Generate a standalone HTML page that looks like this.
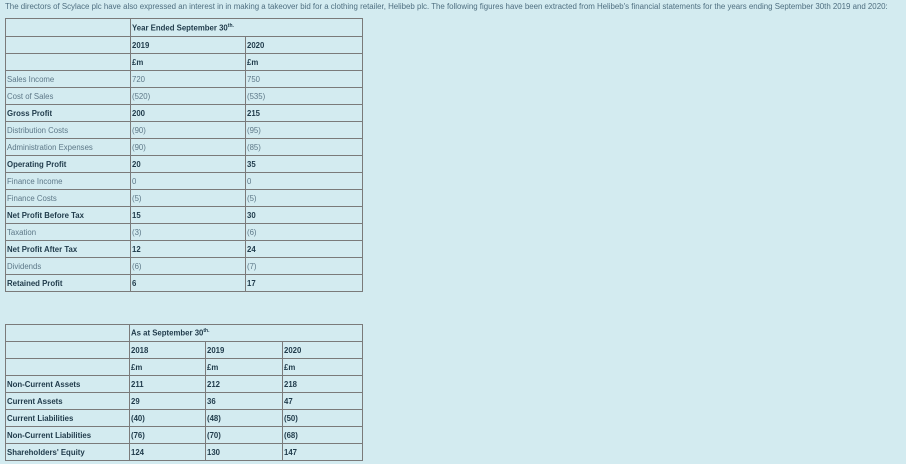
<!DOCTYPE html>
<html><head><meta charset="utf-8"><style>
body{margin:0;background:#d3ebf0;width:906px;height:464px;overflow:hidden;font-family:"Liberation Sans",sans-serif;color:#5d7888;font-size:7.8px;position:relative}
.p{position:absolute;left:5px;top:2px;white-space:nowrap;font-size:7.9px;letter-spacing:-0.01px;color:#4f6f80}
table{position:absolute;border-collapse:collapse;border:1.5px solid #333;table-layout:fixed}
td{border:1px solid #7a7a7a;padding:0 0 0 1px;height:16px;vertical-align:middle;white-space:nowrap;overflow:hidden}
.b td{font-weight:bold;color:#1f3a4a}
.h{font-weight:bold;color:#1f3a4a}
sup{font-size:5px}
</style></head><body>
<div class="p">The directors of Scylace plc have also expressed an interest in in making a takeover bid for a clothing retailer, Helibeb plc. The following figures have been extracted from Helibeb's financial statements for the years ending September 30th 2019 and 2020:</div>
<table style="left:5px;top:18px;width:357px">
<colgroup><col style="width:125px"><col style="width:115px"><col style="width:117px"></colgroup>
<tr><td style="height:17px"></td><td colspan="2" class="h">Year Ended September 30<sup>th.</sup></td></tr>
<tr class="b"><td></td><td>2019</td><td>2020</td></tr>
<tr class="b"><td></td><td>£m</td><td>£m</td></tr>
<tr><td>Sales Income</td><td>720</td><td>750</td></tr>
<tr><td>Cost of Sales</td><td>(520)</td><td>(535)</td></tr>
<tr class="b"><td>Gross Profit</td><td>200</td><td>215</td></tr>
<tr><td>Distribution Costs</td><td>(90)</td><td>(95)</td></tr>
<tr><td>Administration Expenses</td><td>(90)</td><td>(85)</td></tr>
<tr class="b"><td>Operating Profit</td><td>20</td><td>35</td></tr>
<tr><td>Finance Income</td><td>0</td><td>0</td></tr>
<tr><td>Finance Costs</td><td>(5)</td><td>(5)</td></tr>
<tr class="b"><td>Net Profit Before Tax</td><td>15</td><td>30</td></tr>
<tr><td>Taxation</td><td>(3)</td><td>(6)</td></tr>
<tr class="b"><td>Net Profit After Tax</td><td>12</td><td>24</td></tr>
<tr><td>Dividends</td><td>(6)</td><td>(7)</td></tr>
<tr class="b"><td>Retained Profit</td><td>6</td><td>17</td></tr>
</table>
<table style="left:5px;top:324px;width:357px">
<colgroup><col style="width:124px"><col style="width:76px"><col style="width:77px"><col style="width:80px"></colgroup>
<tr><td style="height:15px"></td><td colspan="3" class="h">As at September 30<sup>th.</sup></td></tr>
<tr class="b"><td></td><td>2018</td><td>2019</td><td>2020</td></tr>
<tr class="b"><td></td><td>£m</td><td>£m</td><td>£m</td></tr>
<tr class="b"><td>Non-Current Assets</td><td>211</td><td>212</td><td>218</td></tr>
<tr class="b"><td>Current Assets</td><td>29</td><td>36</td><td>47</td></tr>
<tr class="b"><td>Current Liabilities</td><td>(40)</td><td>(48)</td><td>(50)</td></tr>
<tr class="b"><td>Non-Current Liabilities</td><td>(76)</td><td>(70)</td><td>(68)</td></tr>
<tr class="b"><td>Shareholders' Equity</td><td>124</td><td>130</td><td>147</td></tr>
</table>
</body></html>
